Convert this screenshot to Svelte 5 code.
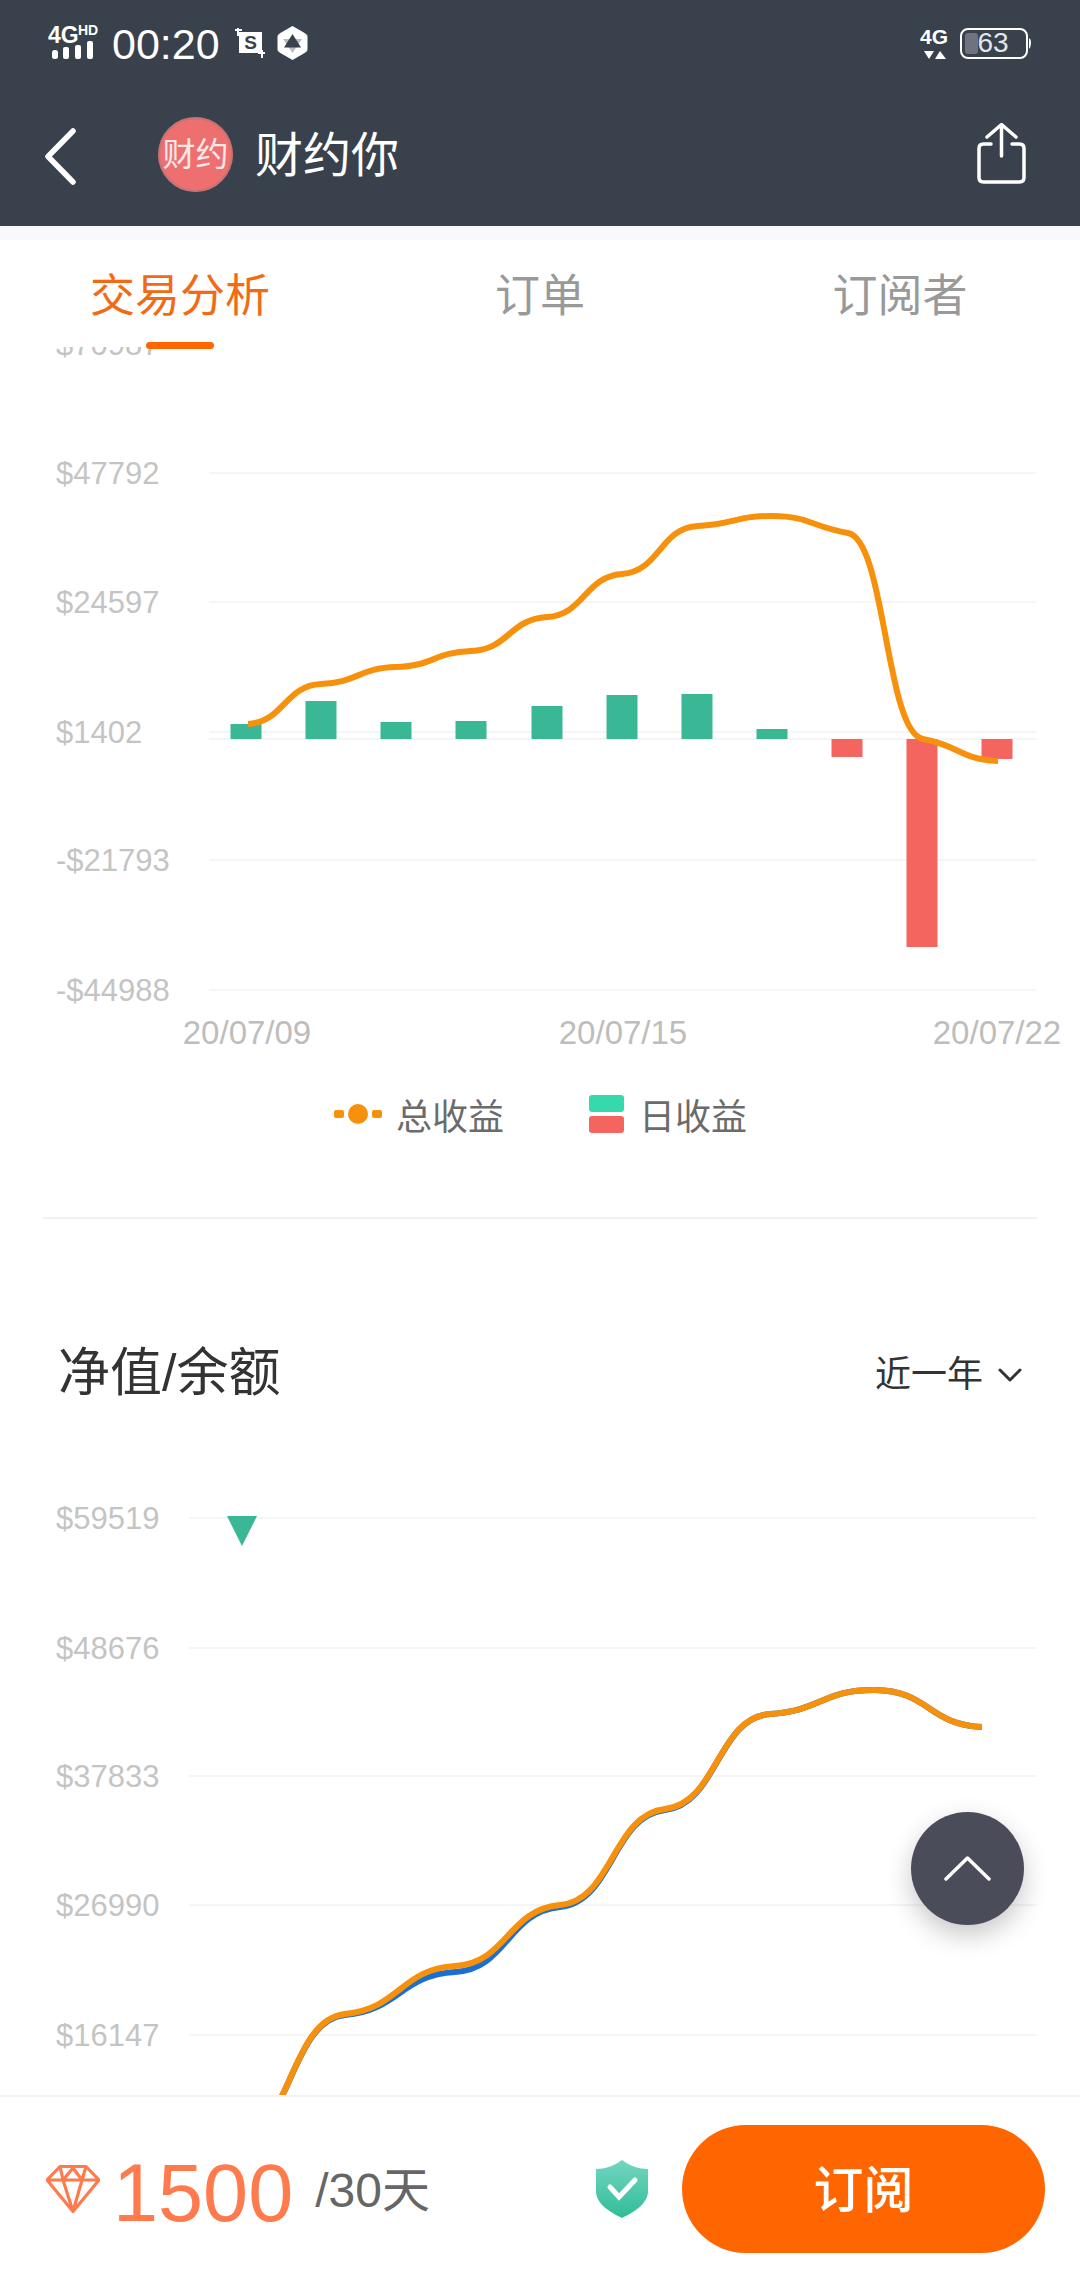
<script>
  function smooth(pts, k = 0.12, h = 0.5) {
    let d = `M${pts[0][0]} ${pts[0][1]}`;
    const slope = (i) => {
      const a = pts[Math.max(0, i - 1)];
      const b = pts[Math.min(pts.length - 1, i + 1)];
      return (k * (b[1] - a[1])) / (b[0] - a[0]);
    };
    for (let i = 0; i < pts.length - 1; i++) {
      const [x0, y0] = pts[i];
      const [x1, y1] = pts[i + 1];
      const l = (x1 - x0) * h;
      d += ` C${x0 + l} ${y0 + slope(i) * l} ${x1 - l} ${y1 - slope(i + 1) * l} ${x1} ${y1}`;
    }
    return d;
  }

  const zero = 739;
  const bars = [
    { x: 246, y: 724 }, { x: 321, y: 701 }, { x: 396, y: 722 }, { x: 471, y: 721 },
    { x: 547, y: 706 }, { x: 622, y: 695 }, { x: 697, y: 694 }, { x: 772, y: 729 },
    { x: 847, y: 757 }, { x: 922, y: 947 }, { x: 997, y: 759 }
  ];
  const chart1Grid = [
    { y: 344, t: '$70987' }, { y: 473, t: '$47792' }, { y: 602, t: '$24597' },
    { y: 732, t: '$1402' }, { y: 860, t: '-$21793' }, { y: 990, t: '-$44988' }
  ];
  const dates = [
    { x: 247, t: '20/07/09' }, { x: 623, t: '20/07/15' }, { x: 997, t: '20/07/22' }
  ];
  const total = smooth([
    [248, 724], [321, 684], [396, 667], [471, 651], [547, 617], [622, 574],
    [698, 526], [772, 516], [848, 533], [923, 739], [998, 761]
  ]);

  const chart2Grid = [
    { y: 1518, t: '$59519' }, { y: 1648, t: '$48676' }, { y: 1776, t: '$37833' },
    { y: 1905, t: '$26990' }, { y: 2035, t: '$16147' }
  ];
  const netLine = smooth([
    [235, 2145], [345, 2014], [455, 1966], [560, 1905], [665, 1809], [770, 1714], [875, 1690], [982, 1727]
  ]);
  const blueLine = smooth([
    [235, 2145], [345, 2015], [455, 1972], [560, 1907], [665, 1810], [770, 1714], [875, 1690], [982, 1727]
  ]);
  const tabs = ['交易分析', '订单', '订阅者'];
</script>

<div class="app">
  <header class="header">
    <div class="status">
      <svg class="sig" width="51" height="36" viewBox="48 23 51 36">
        <text x="48" y="41" class="sig-big">4G</text>
        <text x="78" y="33" class="sig-small">HD</text>
        <rect x="52" y="48" width="6" height="9" rx="2.500" fill="#fff" />
        <rect x="63" y="45" width="6" height="12" rx="2" fill="#fff" />
        <rect x="75" y="43" width="6" height="14" rx="2" fill="#fff" />
        <rect x="87" y="39" width="6" height="18" rx="2" fill="#fff" />
      </svg>
      <span class="time">00:20</span>
      <svg class="shot" width="30" height="30" viewBox="233 28 30 30">
        <rect x="237" y="32" width="23" height="21" fill="#fff" />
        <path d="M233 30H240M236 28V36M256 53H263M260 50V58" stroke="#fff" stroke-width="2" fill="none" />
        <text x="248.500" y="49" class="shot-s">S</text>
      </svg>
      <svg class="hex" width="31" height="36" viewBox="0 0 31 36">
        <path d="M15.500 1.500 L28.500 9 Q30 10 30 11.500 V24.500 Q30 26 28.500 27 L15.500 34.500 L2.500 27 Q1 26 1 24.500 V11.500 Q1 10 2.500 9Z" fill="#fff" stroke="#fff" stroke-width="1" stroke-linejoin="round" />
        <path d="M15.500 28 L6 14 H25Z" fill="#b9bcc2" />
        <path d="M15.500 9 L24 22.500 H7Z" fill="#39414c" />
      </svg>
      <div class="status-right">
        <svg width="28" height="32" viewBox="920 26 28 32">
          <text x="920" y="43" class="sig-4g">4G</text>
          <path d="M924 50H934L929 58ZM935 58L940 50L946 58Z" fill="#fff" />
        </svg>
        <svg width="72" height="32" viewBox="959 26 72 32">
          <rect x="961" y="28" width="66" height="29" rx="7" fill="none" stroke="#fff" stroke-width="2" />
          <rect x="965" y="32" width="13" height="21" rx="3" fill="#6d7380" />
          <path d="M1029 37 Q1031 38 1031 42 Q1031 46 1029 48Z" fill="#fff" />
          <text x="993" y="51" class="bat">63</text>
        </svg>
      </div>
    </div>
    <nav class="nav">
      <svg class="back" width="33" height="57" viewBox="0 0 33 57">
        <path d="M29 3 L4 28.500 L29 54" fill="none" stroke="#fff" stroke-width="5.500" stroke-linecap="round" stroke-linejoin="round" />
      </svg>
      <div class="avatar">财约</div>
      <span class="title">财约你</span>
      <svg class="share" width="50" height="66" viewBox="0 0 50 66">
        <path d="M15 21H7.500Q3 21 3 25.500V54.500Q3 59 7.500 59H43.500Q48 59 48 54.500V25.500Q48 21 43.500 21H36" fill="none" stroke="#fff" stroke-width="3.500" stroke-linecap="round" />
        <path d="M25.500 33V2M11 14 L25.500 1.500 L40 14" fill="none" stroke="#fff" stroke-width="3.500" stroke-linecap="round" stroke-linejoin="round" />
      </svg>
    </nav>
  </header>
  <div class="strip"></div>

  <div class="tabs">
    {#each tabs as tab, i}
      <div class="tab" class:active={i === 0}>{tab}</div>
    {/each}
  </div>

  <main class="scroll">
    <svg class="chart1" width="1080" height="713" viewBox="0 347 1080 713">
      {#each chart1Grid as g}
        <line x1="209" x2="1036" y1={g.y} y2={g.y} class="grid" />
        <text x="56" y={g.y + 11} class="axis">{g.t}</text>
      {/each}
      <line x1="209" x2="1036" y1={zero} y2={zero} class="grid" />
      {#each bars as b}
        <rect
          x={b.x - 15.500}
          y={Math.min(b.y, zero)}
          width="31"
          height={Math.abs(b.y - zero)}
          fill={b.y < zero ? '#3ab795' : '#f5655f'}
        />
      {/each}
      <path d={total} class="line" />
      {#each dates as d}
        <text x={d.x} y="1044" class="axis date">{d.t}</text>
      {/each}
    </svg>

    <div class="legend">
      <div class="legend-item">
        <svg width="48" height="20" viewBox="0 0 48 20">
          <rect x="0" y="6" width="10" height="8" rx="2" fill="#f7900a" />
          <rect x="38" y="6" width="10" height="8" rx="2" fill="#f7900a" />
          <circle cx="24" cy="10" r="10" fill="#f7900a" />
        </svg>
        <span>总收益</span>
      </div>
      <div class="legend-item second">
        <div class="swatches"><i class="teal"></i><i class="red"></i></div>
        <span>日收益</span>
      </div>
    </div>

    <div class="sep"></div>

    <div class="section-head">
      <h2>净值/余额</h2>
      <div class="range">
        <span>近一年</span>
        <svg width="24" height="14" viewBox="0 0 24 14">
          <path d="M2 2 L12 12 L22 2" fill="none" stroke="#333" stroke-width="3" stroke-linecap="round" stroke-linejoin="round" />
        </svg>
      </div>
    </div>

    <svg class="chart2" width="1080" height="615" viewBox="0 1480 1080 615">
      {#each chart2Grid as g}
        <line x1="189" x2="1036" y1={g.y} y2={g.y} class="grid" />
        <text x="56" y={g.y + 11} class="axis">{g.t}</text>
      {/each}
      <path d="M227 1516H257L242 1546Z" fill="#3ab795" />
      <path d={blueLine} class="line blue" />
      <path d={netLine} class="line" />
    </svg>
  </main>

  <footer class="footer">
    <svg class="gem" width="54" height="48" viewBox="0 0 54 48">
      <path d="M14 1.500H40L53 15L27 46.500L1 15Z M1 15H53 M14 1.500L17 15L27 46.500L36 15L40 1.500 M17 15L27 3L36 15" fill="none" stroke="#ff7a4d" stroke-width="3.200" stroke-linejoin="round" />
    </svg>
    <span class="price">1500</span>
    <span class="per">/30天</span>
    <svg class="shield" width="52" height="58" viewBox="0 0 52 58">
      <defs>
        <linearGradient id="sh" x1="0" y1="0" x2="0" y2="1">
          <stop offset="0" stop-color="#74d6c0" />
          <stop offset="1" stop-color="#2fbd98" />
        </linearGradient>
      </defs>
      <path d="M26 0C34 6 43 9 52 9V31C52 44 38 52 26 58C14 52 0 44 0 31V9C9 9 18 6 26 0Z" fill="url(#sh)" />
      <path d="M14 27L23 37L39 20" fill="none" stroke="#fff" stroke-width="5" stroke-linecap="round" />
    </svg>
    <button class="subscribe"><span>订阅</span></button>
  </footer>

  <button class="to-top" aria-label="回到顶部">
    <svg width="47" height="25" viewBox="0 0 47 25">
      <path d="M2 23 L23.500 2 L45 23" fill="none" stroke="#fff" stroke-width="3.500" stroke-linecap="round" stroke-linejoin="round" />
    </svg>
  </button>
</div>

<style>
  :global(body) {
    margin: 0;
    background: #fff;
  }
  .app {
    position: relative;
    width: 1080px;
    height: 2280px;
    overflow: hidden;
    display: flex;
    flex-direction: column;
    background: #fff;
    font-family: "Liberation Sans", "Noto Sans CJK SC", sans-serif;
  }
  svg {
    display: block;
    flex: none;
  }
  .sig,
  .status-right svg {
    overflow: visible;
  }
  .header {
    height: 226px;
    background: #39414c;
    flex: none;
    color: #fff;
  }
  .status {
    height: 86px;
    display: flex;
    align-items: center;
    padding: 0 49px 0 48px;
    box-sizing: border-box;
  }
  .sig-big {
    font: 700 23px "Liberation Sans", sans-serif;
    fill: #fff;
  }
  .sig-4g {
    font: 700 21px "Liberation Sans", sans-serif;
    fill: #fff;
  }
  .sig-small {
    font: 700 14px "Liberation Sans", sans-serif;
    fill: #fff;
  }
  .time {
    font-size: 43px;
    line-height: 1;
    margin-left: 13px;
    margin-top: 2px;
  }
  .shot {
    margin-left: 15px;
  }
  .shot-s {
    font: 700 19px "Liberation Sans", sans-serif;
    fill: #39414c;
    text-anchor: middle;
  }
  .hex {
    margin-left: 12px;
  }
  .status-right {
    margin-left: auto;
    display: flex;
    align-items: center;
    gap: 11px;
  }
  .bat {
    font: 400 28px "Liberation Sans", sans-serif;
    fill: #e4e5e8;
    text-anchor: middle;
  }
  .nav {
    height: 140px;
    display: flex;
    align-items: center;
    padding: 0 54px 0 44px;
  }
  .avatar {
    width: 75px;
    height: 75px;
    border-radius: 50%;
    margin-left: 81px;
    margin-top: -4px;
    background: #ee6f6f;
    box-shadow: inset 0 0 0 2px rgba(150, 120, 120, 0.45);
    color: #fde8e8;
    font-size: 33px;
    text-align: center;
    line-height: 75px;
    white-space: nowrap;
  }
  .title {
    font-size: 48px;
    line-height: 60px;
    margin-left: 22px;
    margin-top: 0;
  }
  .share {
    margin-left: auto;
  }
  .strip {
    height: 14px;
    flex: none;
    background: #f9f9fb;
  }
  .tabs {
    height: 107px;
    flex: none;
    display: flex;
    position: relative;
    z-index: 2;
    background: #fff;
  }
  .tab {
    flex: 1;
    position: relative;
    text-align: center;
    font-size: 45px;
    line-height: 114px;
    color: #999;
  }
  .tab.active {
    color: #f26a13;
  }
  .tab.active::after {
    content: "";
    position: absolute;
    left: 50%;
    bottom: -2px;
    width: 68px;
    height: 7px;
    margin-left: -34px;
    border-radius: 4px;
    background: #ff6600;
  }
  .scroll {
    flex: 1;
    min-height: 0;
    overflow: hidden;
  }
  .grid {
    stroke: #f5f5f5;
    stroke-width: 2;
  }
  .axis {
    font: 400 31px "Liberation Sans", sans-serif;
    fill: #c4c4c4;
  }
  .date {
    font-size: 33px;
    text-anchor: middle;
    fill: #bdbdbd;
  }
  .line {
    fill: none;
    stroke: #f7900a;
    stroke-width: 6;
  }
  .line.blue {
    stroke: #1a6fd4;
  }
  .legend {
    height: 110px;
    display: flex;
    align-items: flex-start;
    padding: 34px 0 0 334px;
    box-sizing: border-box;
    color: #6b6b6b;
    font-size: 36px;
  }
  .legend-item {
    display: flex;
    align-items: center;
    gap: 14px;
    height: 40px;
  }
  .legend-item.second {
    margin-left: 85px;
    gap: 15px;
  }
  .swatches {
    display: flex;
    flex-direction: column;
    gap: 4px;
  }
  .swatches i {
    display: block;
    width: 35px;
    height: 17px;
    border-radius: 3px;
  }
  .teal {
    background: #36d9ac;
  }
  .red {
    background: #f5655f;
  }
  .sep {
    height: 2px;
    margin: 47px 43px 0;
    background: #f0f0f0;
  }
  .section-head {
    height: 261px;
    display: flex;
    align-items: flex-start;
    padding: 121px 58px 0 58px;
    box-sizing: border-box;
  }
  h2 {
    margin: 0;
    font-size: 52px;
    font-weight: 400;
    line-height: 66px;
    color: #333;
  }
  .range {
    margin-left: auto;
    display: flex;
    align-items: center;
    gap: 15px;
    font-size: 36px;
    line-height: 66px;
    color: #333;
    padding-top: 2px;
  }
  .footer {
    height: 185px;
    flex: none;
    box-sizing: border-box;
    border-top: 2px solid #f2f2f2;
    background: #fff;
    display: flex;
    align-items: center;
    padding: 0 35px 0 46px;
    position: relative;
    z-index: 2;
  }
  .price {
    margin-left: 13px;
    margin-top: 10px;
    font-size: 81px;
    line-height: 1;
    color: #ff7a4d;
  }
  .per {
    margin-left: 22px;
    margin-top: -6px;
    font-size: 48px;
    color: #666;
  }
  .shield {
    margin-left: auto;
  }
  .subscribe {
    margin-left: 34px;
    width: 363px;
    height: 128px;
    border: 0;
    border-radius: 64px;
    background: #ff6600;
    color: #fff;
    font: 500 50px "Liberation Sans", "Noto Sans CJK SC", sans-serif;
  }
  .subscribe span {
    position: relative;
    top: -3px;
  }
  .to-top {
    position: absolute;
    left: 911px;
    top: 1812px;
    width: 113px;
    height: 113px;
    padding: 0;
    border: 0;
    border-radius: 50%;
    background: #4a4c5a;
    box-shadow: 0 10px 26px rgba(0, 0, 0, 0.22);
    display: flex;
    align-items: center;
    justify-content: center;
    z-index: 3;
  }
</style>
